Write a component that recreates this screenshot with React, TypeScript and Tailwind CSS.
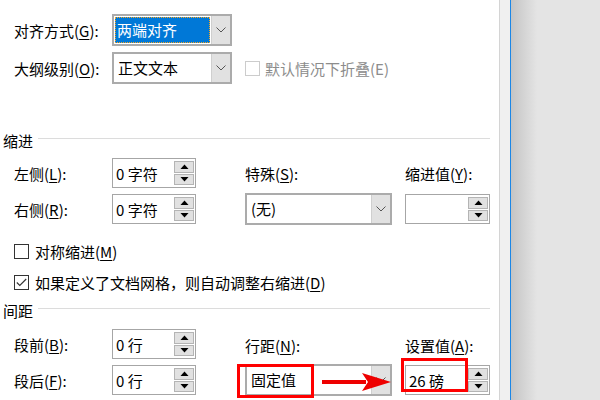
import React from "react";

const Tri = ({ up }: { up: boolean }) => (
  <svg width="9" height="5" viewBox="0 0 9 5">
    {up ? <polygon points="0.5,5 8.5,5 4.5,0.5" fill="#000" /> : <polygon points="0.5,0 8.5,0 4.5,4.5" fill="#000" />}
  </svg>
);

const Chevron = () => (
  <svg width="10" height="6" viewBox="0 0 10 6">
    <polyline points="0.5,0.5 5,5 9.5,0.5" fill="none" stroke="#555" strokeWidth="1" />
  </svg>
);

const Spin = ({ value, w = 84 }: { value: string; w?: number }) => (
  <div
    className="h-[30px] border border-[#a6a6a6] bg-white flex items-stretch"
    style={{ width: w }}
  >
    <div className="flex-1 flex items-center pl-[3px] text-[15px] leading-none">{value}</div>
    <div className="w-[21px] flex flex-col gap-[1px] py-[2px] pr-[1px]">
      <div className="flex-1 bg-[#e1e1e1] border border-[#b4b4b4] flex items-center justify-center">
        <Tri up />
      </div>
      <div className="flex-1 bg-[#e1e1e1] border border-[#b4b4b4] flex items-center justify-center">
        <Tri up={false} />
      </div>
    </div>
  </div>
);

const Combo = ({ value, w, selected }: { value: string; w: number; selected?: boolean }) => (
  <div className="h-[32px] border-2 border-[#ababab] bg-white flex items-stretch" style={{ width: w }}>
    <div className="flex-1 p-[1px] flex">
      {selected ? (
        <div className="flex-1 bg-[#0078d7] border border-dotted border-[#f5a623] text-white flex items-center pl-[1px] text-[15px]">
          {value}
        </div>
      ) : (
        <div className="flex-1 flex items-center pl-[3px] text-[15px]">{value}</div>
      )}
    </div>
    <div className="w-[19px] bg-[#e1e1e1] border-l border-[#cfcfcf] flex items-center justify-center">
      <Chevron />
    </div>
  </div>
);

const Header = ({ text }: { text: string }) => (
  <div className="h-[20px] flex items-center pl-[3px]">
    <span className="text-[15px] leading-none">{text}</span>
    <div className="flex-1 h-px bg-[#dcdcdc] ml-[5px] mr-[9px] mb-[4px]" />
  </div>
);

const Label = ({ pre, acc, w }: { pre: string; acc: string; w: number }) => (
  <div className="text-[15px] leading-none" style={{ width: w }}>
    {pre}(<u className="underline-offset-2">{acc}</u>):
  </div>
);

const Check = ({ checked, disabled }: { checked?: boolean; disabled?: boolean }) => (
  <div
    className={
      "w-[15px] h-[15px] border bg-white flex items-center justify-center " +
      (disabled ? "border-[#cccccc]" : "border-[#333333]")
    }
  >
    {checked && (
      <svg width="11" height="9" viewBox="0 0 11 9">
        <polyline points="0.8,4.5 3.8,7.5 10.2,1" fill="none" stroke="#333" strokeWidth="1.1" />
      </svg>
    )}
  </div>
);

export default function App() {
  return (
    <div
      className="w-[600px] h-[400px] flex overflow-hidden bg-[#e4e4e4] text-black"
      style={{ fontFamily: '"Noto Sans CJK SC", "Noto Sans", sans-serif' }}
    >
      <div className="w-[499px] h-full bg-white relative flex flex-col">
        <div className="h-[14px] flex flex-col">
          <div className="-mt-[19px] h-[20px] flex items-center pl-[3px] text-[15px] leading-none">常规</div>
        </div>
        <div className="h-[32px] flex items-center">
          <div className="w-[112px] pl-[14px]">
            <Label pre="对齐方式" acc="G" w={98} />
          </div>
          <Combo value="两端对齐" w={120} selected />
        </div>
        <div className="h-[32px] mt-[6px] flex items-center">
          <div className="w-[112px] pl-[14px]">
            <Label pre="大纲级别" acc="O" w={98} />
          </div>
          <Combo value="正文文本" w={120} />
          <div className="ml-[13px]">
            <Check disabled />
          </div>
          <span className="ml-[5px] text-[15px] leading-none text-[#8c8c8c]">默认情况下折叠(E)</span>
        </div>

        <div className="mt-[46px]">
          <Header text="缩进" />
        </div>

        <div className="h-[30px] mt-[8px] flex items-center">
          <div className="w-[112px] pl-[14px]">
            <Label pre="左侧" acc="L" w={98} />
          </div>
          <Spin value="0 字符" />
          <div className="ml-[49px]">
            <Label pre="特殊" acc="S" w={160} />
          </div>
          <Label pre="缩进值" acc="Y" w={85} />
        </div>
        <div className="h-[30px] mt-[6px] flex items-center">
          <div className="w-[112px] pl-[14px]">
            <Label pre="右侧" acc="R" w={98} />
          </div>
          <Spin value="0 字符" />
          <div className="ml-[49px]">
            <Combo value="(无)" w={147} />
          </div>
          <div className="ml-[13px]">
            <Spin value="" w={85} />
          </div>
        </div>

        <div className="h-[20px] mt-[17px] flex items-center pl-[14px]">
          <Check />
          <span className="ml-[6px] text-[15px] leading-none">
            对称缩进(<u className="underline-offset-2">M</u>)
          </span>
        </div>
        <div className="h-[20px] mt-[11px] flex items-center pl-[14px]">
          <Check checked />
          <span className="ml-[6px] text-[15px] leading-none">
            如果定义了文档网格，则自动调整右缩进(<u className="underline-offset-2">D</u>)
          </span>
        </div>

        <div className="mt-[8px]">
          <Header text="间距" />
        </div>

        <div className="h-[30px] mt-[9px] flex items-center">
          <div className="w-[112px] pl-[14px]">
            <Label pre="段前" acc="B" w={98} />
          </div>
          <Spin value="0 行" />
          <div className="ml-[49px] pt-[3px]">
            <Label pre="行距" acc="N" w={160} />
          </div>
          <div className="pt-[3px]">
            <Label pre="设置值" acc="A" w={85} />
          </div>
        </div>
        <div className="h-[30px] mt-[6px] flex items-center">
          <div className="w-[112px] pl-[14px]">
            <Label pre="段后" acc="F" w={98} />
          </div>
          <Spin value="0 行" />
          <div className="ml-[49px]">
            <Combo value="固定值" w={147} />
          </div>
          <div className="ml-[13px]">
            <Spin value="26 磅" w={85} />
          </div>
        </div>

        {/* red annotations */}
        <div className="absolute left-[237px] top-[364px] w-[77px] h-[34px] border-[3px] border-[#ff0000]" />
        <div className="absolute left-[401px] top-[358px] w-[67px] h-[34px] border-[3px] border-[#ff0000]" />
        <svg className="absolute left-[320px] top-[370px]" width="72" height="24" viewBox="0 0 72 24">
          <rect x="2" y="10" width="44" height="4" fill="#ee0000" />
          <polygon points="42,3 71,12 42,21 48,12" fill="#ee0000" />
        </svg>
      </div>
      <div className="w-px h-full bg-[#d4d4d4]" />
      <div className="w-[10px] h-full bg-[#f0f0f0]" />
      <div className="w-px h-full bg-[#1a86e6]" />
      <div className="w-[26px] h-full bg-gradient-to-r from-[#c4c4c4] to-[#e4e4e4]" />
      <div className="flex-1 h-full bg-[#e4e4e4]" />
    </div>
  );
}
